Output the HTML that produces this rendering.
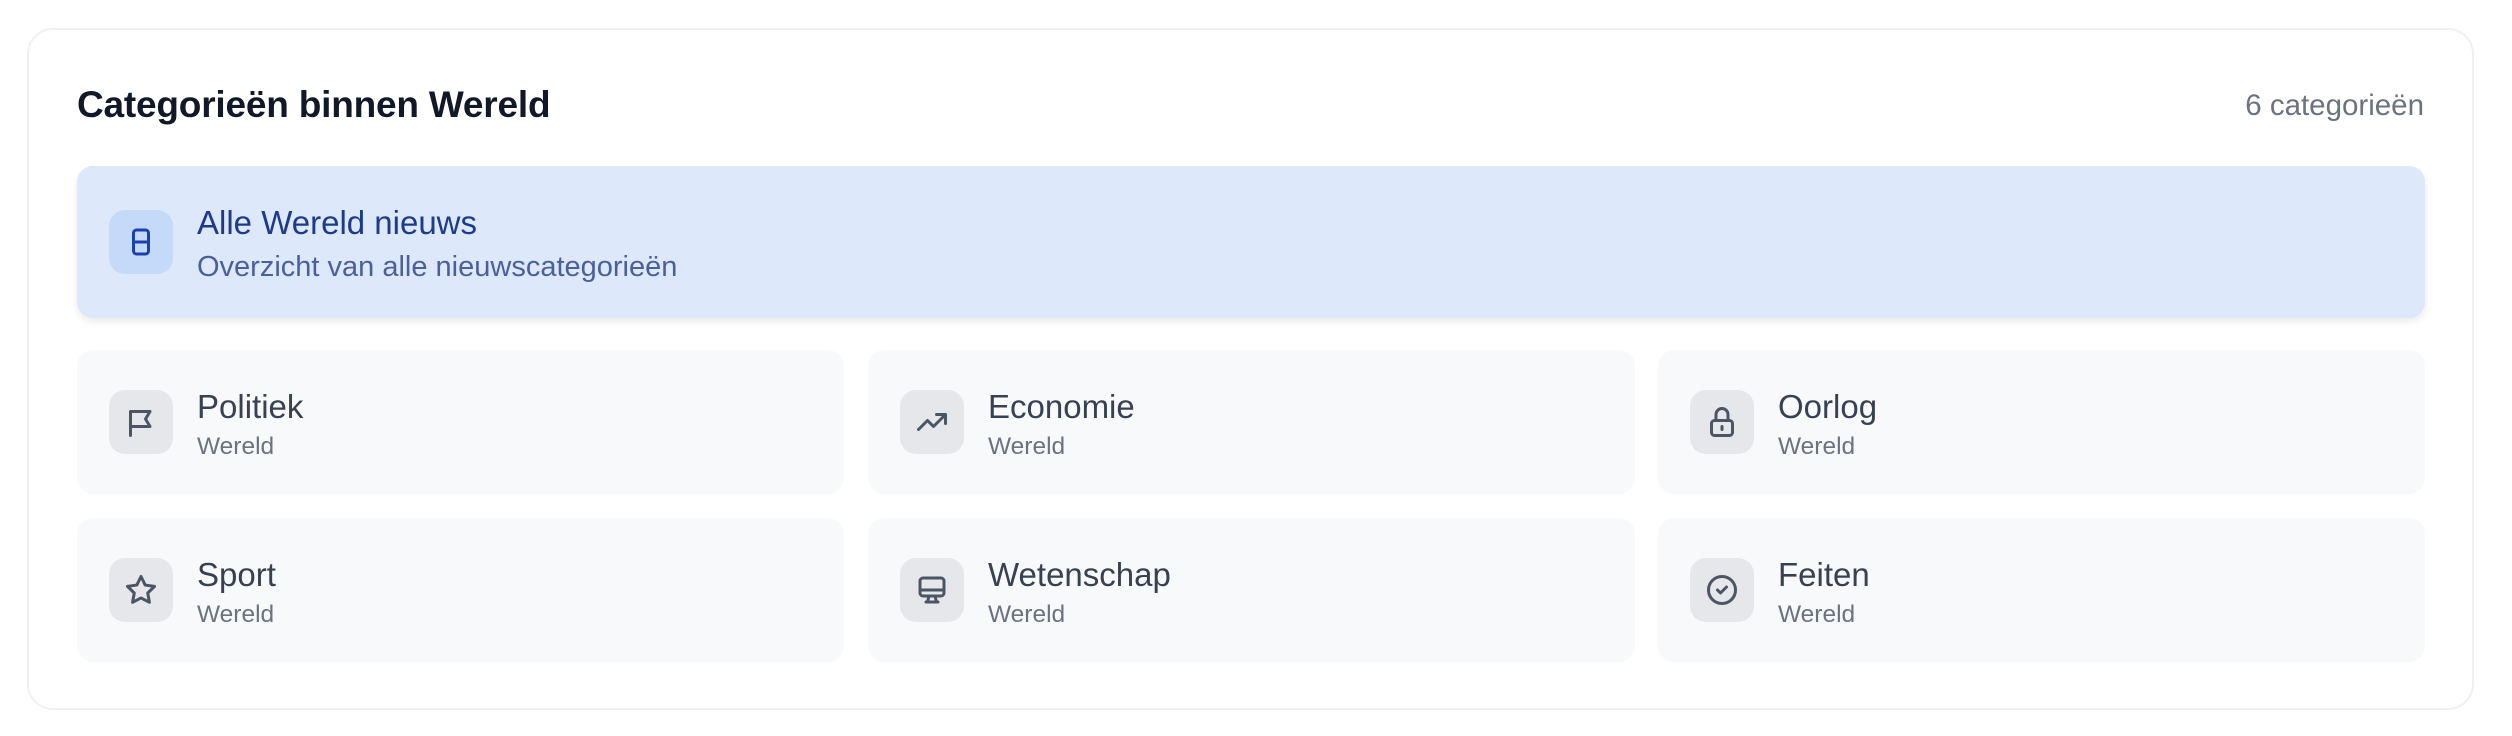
<!DOCTYPE html>
<html><head><meta charset="utf-8"><style>
*{margin:0;padding:0;box-sizing:border-box}
body{width:2512px;height:736px;background:#fff;font-family:"Liberation Sans",sans-serif;position:relative;overflow:hidden}
.outer{position:absolute;left:27px;top:28px;width:2447px;height:682px;border:2px solid #eef0f3;border-radius:26px;background:#fff}
.h{position:absolute;left:77px;top:84px;font-size:37px;font-weight:700;color:#111827;letter-spacing:-0.2px}
.cnt{position:absolute;right:88px;top:89px;font-size:29.5px;color:#6b7280}
.hero{position:absolute;left:77px;top:166px;width:2348px;height:152px;background:#dde8fa;border-radius:16px;box-shadow:0 4px 8px rgba(0,0,0,.08)}
.ib{position:absolute;left:32px;width:64px;height:64px;border-radius:16px;display:flex;align-items:center;justify-content:center}
.hero .ib{top:44px;background:#c5d9f8}
.hero .t{position:absolute;left:120px;top:38px;font-size:33px;color:#1e3a8a}
.hero .s{position:absolute;left:120px;top:85px;font-size:29px;color:#4b5f9c}
.c{position:absolute;width:767px;height:144px;background:#f8f9fb;border-radius:16px}
.c .ib{top:40px;background:#e5e7eb}
.c .t{position:absolute;left:120px;top:38px;font-size:33px;color:#374151}
.c .s{position:absolute;left:120px;top:83px;font-size:24.5px;color:#6b7280}
svg{width:36px;height:36px;fill:none;stroke:#4b5563;stroke-width:2;stroke-linecap:round;stroke-linejoin:round}
</style></head><body>
<div class="outer"></div>
<div class="h">Categorieën binnen Wereld</div>
<div class="cnt">6 categorieën</div>
<div class="hero"><div class="ib"><svg viewBox="0 0 24 24" style="stroke:#1e40af"><rect x="7" y="4" width="10" height="16" rx="2"/><path d="M7 12h10"/></svg></div>
<div class="t">Alle Wereld nieuws</div><div class="s">Overzicht van alle nieuwscategorieën</div></div>

<div class="c" style="left:77px;top:350px"><div class="ib"><svg viewBox="0 0 24 24"><path d="M5 21V5h13l-3 5 3 5H5"/></svg></div><div class="t">Politiek</div><div class="s">Wereld</div></div>
<div class="c" style="left:868px;top:350px"><div class="ib"><svg viewBox="0 0 24 24"><path d="M3 17l6-6 4 4 8-8M15 7h6v6"/></svg></div><div class="t">Economie</div><div class="s">Wereld</div></div>
<div class="c" style="left:1658px;top:350px"><div class="ib"><svg viewBox="0 0 24 24"><rect x="5" y="11" width="14" height="10" rx="2"/><path d="M8 11V7a4 4 0 0 1 8 0v4M12 15v2"/></svg></div><div class="t">Oorlog</div><div class="s">Wereld</div></div>
<div class="c" style="left:77px;top:518px"><div class="ib"><svg viewBox="0 0 24 24"><path d="M12 3l2.8 5.7 6.2.9-4.5 4.4 1.1 6.2L12 17.3 6.4 20.2l1.1-6.2L3 9.6l6.2-.9z"/></svg></div><div class="t">Sport</div><div class="s">Wereld</div></div>
<div class="c" style="left:868px;top:518px"><div class="ib"><svg viewBox="0 0 24 24"><rect x="4" y="4" width="16" height="12" rx="2"/><path d="M4 12h16M10 16l-1 4h6l-1-4M8 20h8"/></svg></div><div class="t">Wetenschap</div><div class="s">Wereld</div></div>
<div class="c" style="left:1658px;top:518px"><div class="ib"><svg viewBox="0 0 24 24"><circle cx="12" cy="12" r="9"/><path d="M9 12l2 2 4-4"/></svg></div><div class="t">Feiten</div><div class="s">Wereld</div></div>
</body></html>
